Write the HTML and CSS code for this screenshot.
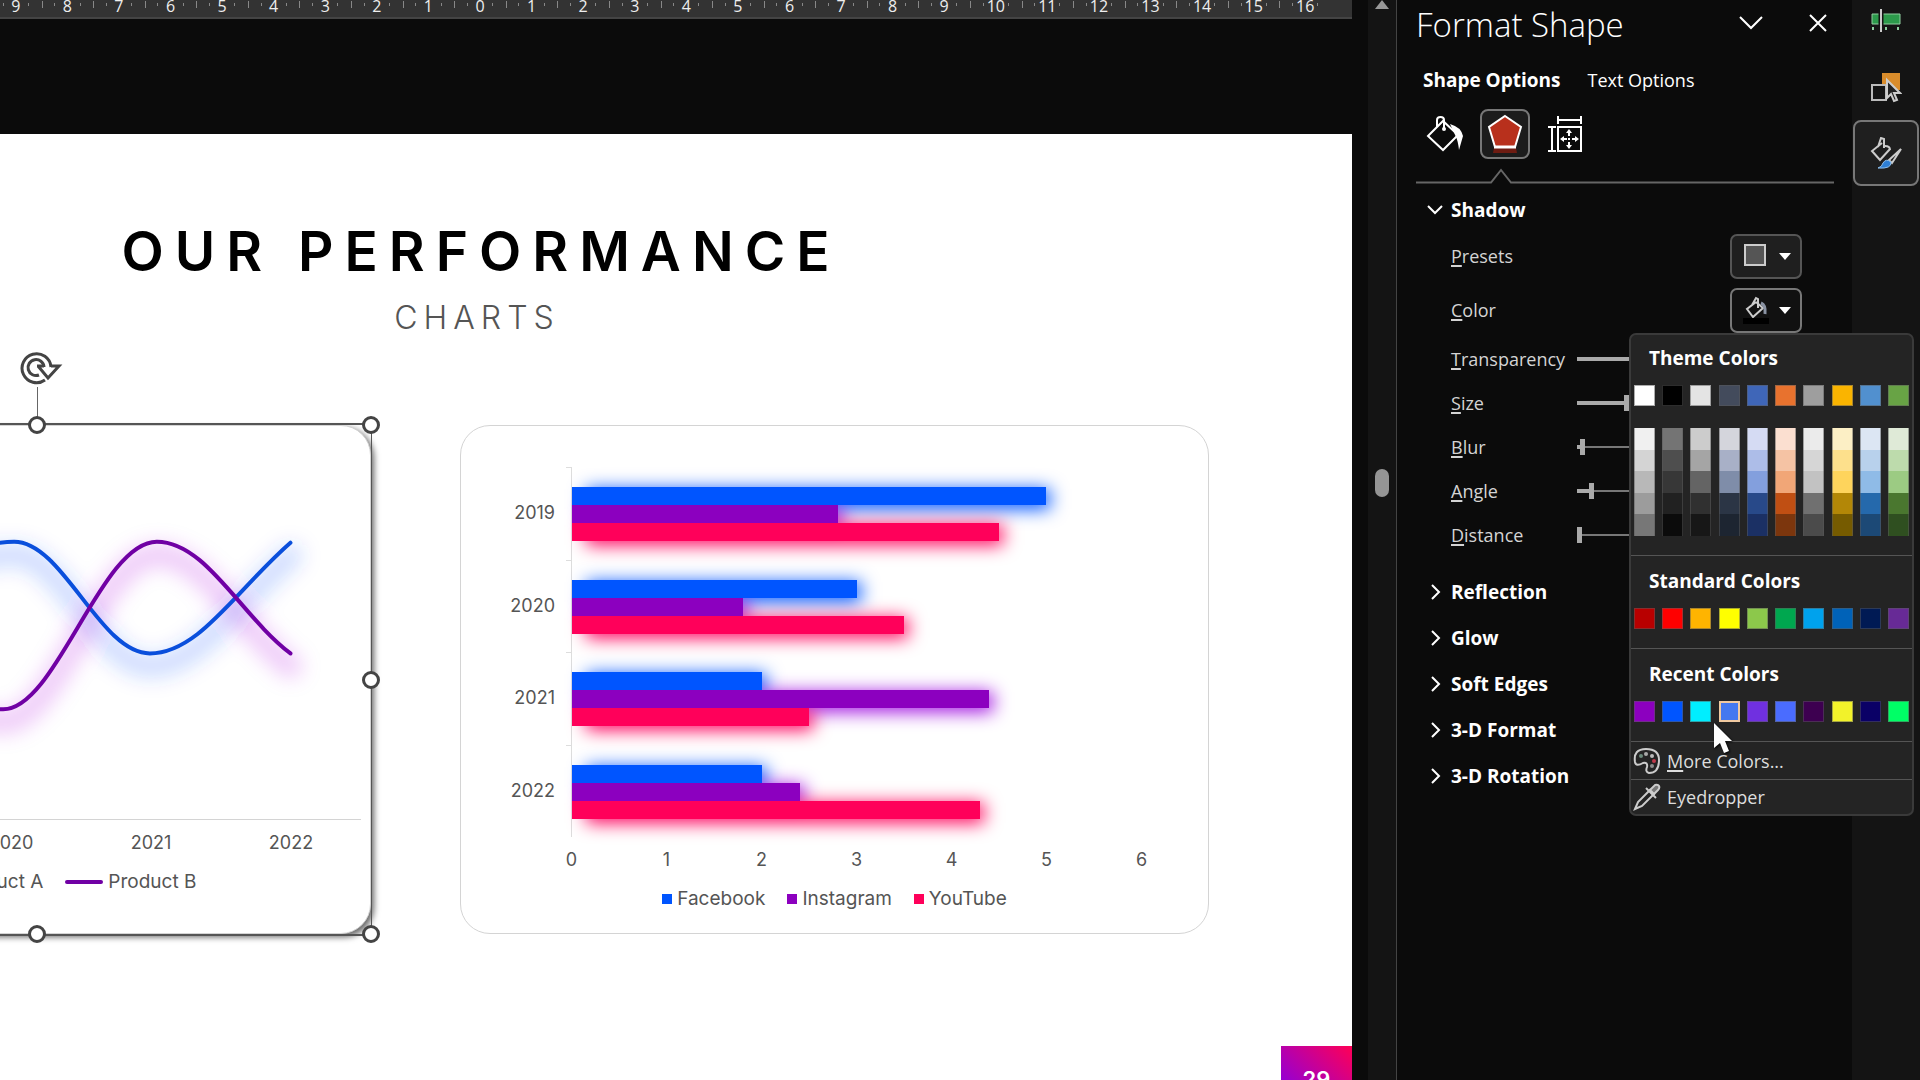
FILE: index.html
```html
<!DOCTYPE html>
<html lang="en">
<head>
<meta charset="UTF-8" />
<meta name="viewport" content="width=device-width, initial-scale=1" />
<title>Format Shape</title>
<link rel="stylesheet" href="styles.css">
</head>
<body>

<main class="workspace">
  <div class="ruler" id="ruler"></div>

  <section class="slide">
    <h1>OUR PERFORMANCE</h1>
    <p class="subtitle">CHARTS</p>

    <div class="cards">
      <article class="card line-card">
        <svg class="line-chart" viewBox="0 0 560 394">
          <defs>
            <filter id="glow" x="-20%" y="-50%" width="140%" height="200%">
              <feGaussianBlur stdDeviation="10" />
            </filter>
          </defs>
          <g fill="none" stroke-linecap="round">
            <g filter="url(#glow)" stroke-width="24" transform="translate(0 13)">
              <path stroke="#0050ff" stroke-opacity=".18" d="M69 180C115 150 165 116 213 116C262 116 299 228 349 228C398 228 435 165 490 117" />
              <path stroke="#b010e0" stroke-opacity=".2" d="M69 190C110 220 160 284 202 284C255 284 300 116 356 116C405 116 440 190 490 228" />
            </g>
            <path stroke="#0a4fdc" stroke-width="4" d="M69 180C115 150 165 116 213 116C262 116 299 228 349 228C398 228 435 165 490 117" />
            <path stroke="#7000a4" stroke-width="4" d="M69 190C110 220 160 284 202 284C255 284 300 116 356 116C405 116 440 190 490 228" />
          </g>
        </svg>
        <div class="years"><span>2019</span><span>2020</span><span>2021</span><span>2022</span></div>
        <ul class="legend line-legend">
          <li><i class="dash facebook"></i>Product A</li>
          <li><i class="dash product-b"></i>Product B</li>
        </ul>

        <div class="selection">
          <svg class="rotate" viewBox="0 0 44 36" fill="none" stroke="#444" stroke-width="3">
            <path d="M32 17A14.500 14.500 0 1 0 26 30" />
            <path d="M25 17A8 8 0 1 0 20 25" />
            <path d="M18 16h7M32 16h8l-11 12-10-12" />
          </svg>
          <i class="handle top"></i>
          <i class="handle top right"></i>
          <i class="handle middle right"></i>
          <i class="handle bottom"></i>
          <i class="handle bottom right"></i>
        </div>
      </article>

      <article class="card bar-card">
        <div class="plot" id="plot"></div>
        <div class="scale"><span>0</span><span>1</span><span>2</span><span>3</span><span>4</span><span>5</span><span>6</span></div>
        <ul class="legend bar-legend">
          <li><i class="key facebook"></i>Facebook</li>
          <li><i class="key instagram"></i>Instagram</li>
          <li><i class="key youtube"></i>YouTube</li>
        </ul>
      </article>
    </div>

    <div class="page-number">29</div>
  </section>
</main>

<div class="scrollbar">
  <svg viewBox="0 0 16 10"><path fill="#999" d="M8 0 15 9H1z" /></svg>
  <span class="thumb"></span>
</div>

<aside class="pane">
  <header class="pane-header">
    <h2>Format Shape</h2>
    <button class="plain" aria-label="Pane options"><svg width="24" height="14" viewBox="0 0 24 14"><path d="M1 1 12 12 23 1" /></svg></button>
    <button class="plain" aria-label="Close"><svg width="18" height="18" viewBox="0 0 18 18"><path d="M1 1 17 17M17 1 1 17" /></svg></button>
  </header>

  <nav class="tabs">
    <button class="plain active">Shape Options</button>
    <button class="plain">Text Options</button>
  </nav>

  <div class="categories">
    <button class="category" aria-label="Fill and line">
      <svg width="38" height="38" viewBox="0 0 38 38">
        <path d="M2 21 17 6 32 20 17 35z" />
        <path d="M11 12V5q0-3 3.500-3T18 5v9" />
        <circle cx="18" cy="14" r="2" fill="#fff" stroke="none" />
        <path d="M24 9q11 3 13 12l-4 14q-1-9-3-13z" fill="#fff" stroke="none" />
      </svg>
    </button>
    <button class="category selected" aria-label="Effects">
      <svg width="38" height="40" viewBox="0 0 38 40">
        <path fill="#6e1c12" stroke="none" d="M8 34h22l1 5H7z" />
        <path fill="#b8301c" d="M19 2 35 13 29 33H9L3 13z" />
        <path stroke-width="3" d="M8 33h22" />
      </svg>
    </button>
    <button class="category" aria-label="Size and properties">
      <svg width="38" height="38" viewBox="0 0 38 38">
        <path d="M12 12h23v24H12zM12 1v8M35 1v8M12 5h23M2 12h8M2 36h8M6 12v24" />
        <path d="M17 24h4M26 24h4M23 17v4M23 27v4" />
        <path fill="#fff" stroke="none" d="M14 24l4-3v6zM33 24l-4-3v6zM23 14l3 4h-6zM23 34l3-4h-6zM22 23h2v2h-2z" />
      </svg>
    </button>
  </div>
  <svg class="pointer" viewBox="0 0 420 16" preserveAspectRatio="xMinYMid slice"><path d="M0 14.500H75L85 2 95 14.500H420" /></svg>

  <section class="shadow-options">
    <button class="section-title"><svg width="16" height="16" viewBox="0 0 16 16"><path d="M1 4l7 7 7-7" /></svg>Shadow</button>

    <div class="option tall">
      <span><u>P</u>resets</span>
      <button class="picker" aria-label="Presets" aria-haspopup="true">
        <svg width="26" height="28" viewBox="0 0 26 28"><path d="M2 3h20v20H2z" fill="#555" stroke="#ccc" /></svg>
        <span class="arrow"></span>
      </button>
    </div>

    <div class="option tall color-option">
      <span><u>C</u>olor</span>
      <button class="picker open" aria-label="Color" aria-haspopup="true" aria-expanded="true">
        <svg width="26" height="28" viewBox="0 0 26 28">
          <path stroke="#ccc" d="M13 6 4 13 10 21 20 12 13 6M9 9l4-7 2 1v9" />
          <path stroke="#8a93a3" stroke-width="3" d="M18 7q5 2 4 11" />
          <path d="M0 22h26v6H0z" fill="#000" stroke="none" />
        </svg>
        <span class="arrow"></span>
      </button>

      <div class="color-menu">
        <section class="theme">
          <h3>Theme Colors</h3>
          <div class="swatches" id="theme"></div>
          <div class="swatches shades" id="shades"></div>
        </section>
        <section>
          <h3>Standard Colors</h3>
          <div class="swatches" id="standard"></div>
        </section>
        <section>
          <h3>Recent Colors</h3>
          <div class="swatches" id="recent"></div>
        </section>
        <button class="menu-item">
          <svg width="28" height="28" viewBox="0 0 28 28">
            <path stroke="#ccc" d="M2 15Q0 2 13 2T26 13Q26 26 16 26Q12 25 14 20Q15 15 10 16Q3 20 2 15z" />
            <g stroke="none"><circle cx="8" cy="9" r="2" fill="#6b8a7b" /><circle cx="13" cy="7" r="2" fill="#aaa" /><circle cx="19" cy="9" r="2" fill="#bbb" /><circle cx="21" cy="14" r="2" fill="#c0394b" /><circle cx="19" cy="19" r="2" fill="#8d8d8d" /></g>
          </svg>
          <span><u>M</u>ore Colors...</span>
        </button>
        <button class="menu-item eyedropper">
          <svg width="28" height="28" viewBox="0 0 28 28">
            <path d="M2 26 5 19 17 7 21 11 9 23z" />
            <path fill="#777" d="M17 7l5-5q3-1 4 1t-1 4l-4 4z" />
            <path d="M13 5l10 10" />
          </svg>
          <span>Eyedropper</span>
        </button>
      </div>
    </div>

    <div class="option"><label for="transparency"><u>T</u>ransparency</label><input type="range" id="transparency" value="60" /></div>
    <div class="option"><label for="size"><u>S</u>ize</label><input type="range" id="size" value="30" /></div>
    <div class="option"><label for="blur"><u>B</u>lur</label><input type="range" id="blur" value="2" /></div>
    <div class="option"><label for="angle"><u>A</u>ngle</label><input type="range" id="angle" value="8" /></div>
    <div class="option"><label for="distance"><u>D</u>istance</label><input type="range" id="distance" value="0" /></div>
  </section>

  <button class="section-title"><svg width="16" height="16" viewBox="0 0 16 16"><path d="M5 1l7 7-7 7" /></svg>Reflection</button>
  <button class="section-title"><svg width="16" height="16" viewBox="0 0 16 16"><path d="M5 1l7 7-7 7" /></svg>Glow</button>
  <button class="section-title"><svg width="16" height="16" viewBox="0 0 16 16"><path d="M5 1l7 7-7 7" /></svg>Soft Edges</button>
  <button class="section-title"><svg width="16" height="16" viewBox="0 0 16 16"><path d="M5 1l7 7-7 7" /></svg>3-D Format</button>
  <button class="section-title"><svg width="16" height="16" viewBox="0 0 16 16"><path d="M5 1l7 7-7 7" /></svg>3-D Rotation</button>
</aside>

<nav class="rail">
  <button aria-label="Animation pane">
    <svg width="32" height="32" viewBox="0 0 32 32">
      <path fill="#2c9a4b" stroke="#8fcfa0" stroke-width="1" d="M2 9h28v10H2z" />
      <path stroke="#141414" stroke-width="5" d="M11 4v24" />
      <path stroke="#ccc" d="M11 4v23" />
      <path stroke="#8fcfa0" d="M3 22v3M16 22v3M28 22v3" />
    </svg>
  </button>
  <button aria-label="Selection pane">
    <svg width="32" height="32" viewBox="0 0 32 32">
      <path fill="#d98c2b" stroke="none" d="M12 2h18v17H12z" />
      <path fill="#141414" stroke="#bbb" d="M2 14h14v15H2z" />
      <path fill="#222" stroke="#ccc" d="M17 9v18l4-4 3 7 3-1-3-7h6z" />
    </svg>
  </button>
  <button class="selected" aria-label="Format shape">
    <svg width="32" height="32" viewBox="0 0 32 32">
      <path stroke="#ccc" d="M12 6 2 14l8 9 10-11M8 10l3-9 3 1v9M15 9q5 0 5 4" />
      <path stroke="#ccc" d="M31 12 19 23l3 3z" />
      <path fill="#2d7fd6" stroke="#8fc0ee" stroke-width="1" d="M8 31q4-1 5-5 3-5 8-1 1 7-13 6z" />
    </svg>
  </button>
</nav>

<svg class="cursor" viewBox="0 0 20 32"><path fill="#fff" d="M1 0v25l6-5 4 10 5-2-4-10h7z" /></svg>

<script>
  // horizontal ruler, centre of the slide is 0
  const ruler = document.getElementById('ruler');
  for (let i = -9; i <= 16; i++) {
    ruler.innerHTML += `<span>${Math.abs(i)}</span>`;
  }

  // bar chart
  const maxValue = 6;
  const series = ['facebook', 'instagram', 'youtube'];
  const data = {
    2019: [5, 2.8, 4.5],
    2020: [3, 1.8, 3.5],
    2021: [2, 4.4, 2.5],
    2022: [2, 2.4, 4.3]
  };
  const plot = document.getElementById('plot');
  Object.keys(data).forEach(year => {
    const bars = data[year].map((v, i) =>
      `<div class="bar ${series[i]}" style="width:${v / maxValue * 100}%"></div>`).join('');
    plot.innerHTML += `<span class="year">${year}</span><div class="group">${bars}</div>`;
  });

  // colour menu
  const palettes = {
    theme: ['#ffffff', '#000000', '#e4e4e4', '#434b5c', '#3f66b8', '#e8722e', '#9e9e9e', '#fab400', '#5190cf', '#68a345'],
    shades: [
      '#f0f0f0', '#747474', '#cccccc', '#d4d5dc', '#d5dbf3', '#fbdfd0', '#ebebeb', '#fcefc5', '#dce6f3', '#dfead7',
      '#d4d4d4', '#4e4e4e', '#a5a5a5', '#a8b0c7', '#adbde8', '#f5c3a4', '#d6d6d6', '#fde08c', '#b8d1ec', '#bddbac',
      '#b8b8b8', '#373737', '#646464', '#7f8da9', '#839fdd', '#f1a677', '#c2c2c2', '#fed45c', '#8fbbe7', '#9ccb83',
      '#9c9c9c', '#212121', '#303030', '#2b3545', '#284989', '#c04f13', '#707070', '#b38707', '#2569ac', '#4a772f',
      '#777777', '#0b0b0b', '#171717', '#1d2531', '#1b3064', '#7c360d', '#4b4b4b', '#765b00', '#1c4976', '#2f4f20'
    ],
    standard: ['#b80000', '#ff0000', '#ffb400', '#ffff00', '#8cc84b', '#00a74f', '#00a2ed', '#0062b8', '#001a54', '#672a96'],
    recent: ['#8c00bf', '#0055ff', '#00eeff', '#4478f0', '#7030e0', '#4a6cff', '#3d0050', '#f2f22a', '#0a0066', '#00ff66']
  };
  Object.keys(palettes).forEach(name => {
    document.getElementById(name).innerHTML = palettes[name].map(c =>
      `<button aria-label="${c}" style="background:${c}"></button>`).join('');
  });
  document.querySelectorAll('#recent button')[3].classList.add('hover');

  // filled part of the sliders
  document.querySelectorAll('input[type=range]').forEach(input => {
    const paint = () => input.style.setProperty('--fill', input.value + '%');
    input.addEventListener('input', paint);
    paint();
  });
</script>

</body>
</html>
```
FILE: styles.css
```css
* { box-sizing: border-box; }
body {
  margin: 0; height: 100vh; display: flex; overflow: hidden;
  background: #0b0b0b; color: #fff; font-family: "Open Sans", "Noto Sans", sans-serif; font-size: 18px;
}
h1, h2, h3, p, ul { margin: 0; padding: 0; }
button { font: inherit; color: inherit; padding: 0; border: none; background: none; cursor: pointer; }
svg { display: block; fill: none; flex: none; }
button svg { stroke: #fff; stroke-width: 2; }
u { text-decoration-thickness: 2px; text-underline-offset: 2px; text-decoration-skip-ink: none; }

/* editing area */
.workspace { flex: 1; min-width: 0; padding-right: 16px; display: flex; flex-direction: column; overflow: hidden; }
.ruler {
  display: flex; height: 19px; flex: none; margin-bottom: 115px; padding-right: 21px;
  background: #333; border-bottom: 2px solid #444;
}
.ruler span {
  flex: 1; font-size: 16px; line-height: 12px; text-align: center; color: #eee;
  background:
    linear-gradient(#888, #888) 0 1px / 1px 7px no-repeat,
    linear-gradient(#888, #888) 25% 3px / 1px 3px no-repeat,
    linear-gradient(#888, #888) 75% 3px / 1px 3px no-repeat;
}
.ruler span:first-child { margin-left: -10px; }
.slide {
  flex: 1; margin-left: -398px; padding: 85px 143px 0 100px; position: relative;
  background: #fff; color: #555; font-family: Inter, sans-serif; overflow: hidden;
}
/* the titles are centred on the slide, not on the cards */
.slide h1, .subtitle { text-align: center; margin: 0 -143px 0 -100px; }
.slide h1 { font-size: 55px; line-height: 64px; font-weight: 600; letter-spacing: 11px; padding-left: 8px; color: #000; }
.subtitle { font-size: 32px; line-height: 40px; font-weight: 300; letter-spacing: 6px; padding-top: 15px; }

.cards { display: grid; grid-template-columns: 669fr 749fr; gap: 89px; margin-top: 87px; }
.card { border: 1px solid #d4d4d4; border-radius: 30px; background: #fff; line-height: 24px; }
.legend { list-style: none; display: flex; justify-content: center; gap: 22px; margin-top: 15px; font-size: 19px; }
.legend li { display: flex; align-items: center; gap: 5px; }
.facebook { background: #0055ff; color: #0055ff; }
.instagram { background: #8c00bf; color: #a010e0; }
.youtube { background: #ff005a; color: #ff005a; }
.product-b { background: #7000a4; }
.key { width: 10px; height: 10px; }
.dash { width: 38px; height: 4px; border-radius: 2px; }

.line-card { position: relative; padding: 0 9px 0 98px; box-shadow: 3px 3px 6px rgba(0, 0, 0, .6); }
.line-chart { width: 100%; height: 394px; border-bottom: 1px solid #d4d4d4; }
.years { display: flex; margin-top: 11px; }
.years span { flex: 1; text-align: center; }
.line-legend { padding-right: 54px; }

/* selection frame drawn over the card */
.selection { position: absolute; inset: -3px -2px; border: 2px solid #555; border-right-width: 1px; }
.handle {
  position: absolute; left: 50%; width: 18px; height: 18px; margin: -9px;
  border: 3px solid #444; border-radius: 50%; background: #fff;
}
.handle.top { top: 0; }
.handle.middle { top: 50%; }
.handle.bottom { top: 100%; }
.handle.right { left: 100%; }
.rotate { position: absolute; left: 50%; top: -75px; width: 44px; height: 36px; margin-left: -18px; }
.selection::before { content: ""; position: absolute; left: 50%; top: -38px; height: 38px; border-left: 1px solid #666; }

.bar-card { padding: 41px 67px 22px 0; }
.plot { display: grid; grid-template-columns: 94px 1fr; column-gap: 16px; grid-auto-rows: 1fr; height: 370px; }
.year { align-self: center; text-align: right; }
.group { padding-top: 20px; border-left: 1px solid #ddd; isolation: isolate; position: relative; }
.group::after { content: ""; position: absolute; left: -6px; top: 0; width: 6px; height: 1px; background: #ddd; }
.bar { height: 18px; position: relative; }
.bar::before { content: ""; position: absolute; inset: 0 0 0 12px; z-index: -1; box-shadow: 3px 3px 18px 1px currentColor; }
.scale { display: flex; margin: 11px -48px 0 63px; }
.scale span { flex: 1; text-align: center; }
.bar-legend { padding-left: 67px; }
.page-number {
  position: absolute; right: 0; top: 912px; width: 71px; height: 71px; line-height: 66px; text-align: center;
  font-size: 22px; font-weight: 600; color: #fff; background: linear-gradient(45deg, #7000ff, #ff0055);
}

.scrollbar { width: 29px; background: #141414; border-right: 1px solid #444; display: flex; flex-direction: column; align-items: center; }
.scrollbar svg { width: 16px; height: 10px; }
.thumb { width: 14px; height: 28px; margin-top: 459px; border-radius: 7px; background: #959595; }

/* format pane */
.pane { width: 455px; flex: none; padding: 0 18px 0 19px; }
.pane-header { display: flex; align-items: center; height: 50px; padding-right: 7px; }
.pane-header h2 { flex: 1; font-size: 33px; line-height: 40px; font-weight: 300; }
.pane-header .plain { margin-left: 46px; padding-bottom: 4px; }
.tabs { display: flex; gap: 27px; height: 59px; align-items: center; padding-left: 7px; }
.tabs .active { font-weight: 700; font-size: 19px; }
.categories { display: flex; gap: 10px; padding-left: 4px; }
.category { width: 50px; height: 50px; display: flex; align-items: center; justify-content: center; border: 1px solid transparent; border-radius: 8px; }
.category.selected { border: 2px solid #777; background: #1c1c1c; }
.pointer { width: 100%; height: 16px; margin-top: 9px; stroke: #666; stroke-width: 2; }

.section-title { display: flex; align-items: center; gap: 8px; width: 100%; height: 46px; padding-left: 11px; font-size: 19px; font-weight: 700; }
.shadow-options { padding-bottom: 12px; }
.shadow-options .section-title { height: 45px; padding-top: 7px; }
.option { display: flex; align-items: center; height: 44px; padding-left: 35px; color: #d4d4d4; }
.option.tall { height: 54px; justify-content: space-between; padding-right: 32px; position: relative; }
.option label { width: 126px; flex: none; }
.picker {
  width: 72px; height: 45px; display: flex; align-items: center; justify-content: center; gap: 10px; padding-left: 2px;
  border: 2px solid #555; border-radius: 7px; background: #1f1f1f;
}
.picker.open { background: #111; border-color: #777; }
.arrow { border: 6px solid transparent; border-top: 7px solid #fff; border-bottom: 0; }

input[type=range] { appearance: none; width: 160px; height: 18px; margin: 0; background: none; }
input[type=range]::-webkit-slider-runnable-track {
  height: 16px;
  background:
    linear-gradient(#aaa, #aaa) 0 50% / var(--fill) 4px no-repeat,
    linear-gradient(#777, #777) 0 50% / 100% 2px no-repeat;
}
input[type=range]::-webkit-slider-thumb { appearance: none; width: 5px; height: 16px; background: #aaa; }

/* colour drop-down */
.color-menu {
  position: absolute; z-index: 2; top: 50px; right: -80px; width: 285px;
  background: #242424; border: 2px solid #3a3a3a; border-radius: 7px; color: #fff;
}
.color-menu section { height: 93px; padding: 13px 3px 0; border-bottom: 1px solid #555; }
.color-menu .theme { height: 221px; padding-top: 11px; }
.color-menu h3 { font-size: 19px; line-height: 24px; padding-left: 15px; margin-bottom: 15px; }
.swatches { display: grid; grid-template-columns: repeat(10, 21px); justify-content: space-between; }
.swatches button { height: 21px; border: 1px solid rgba(90, 90, 90, .5); }
.shades { margin-top: 22px; height: 108px; grid-auto-rows: 1fr; }
.shades button { height: auto; border-width: 0 1px; }
.swatches .hover { border: 2px solid #f0c9a0; }
.menu-item { display: flex; align-items: center; gap: 6px; width: 100%; height: 37px; padding-left: 2px; color: #ddd; }
.menu-item svg { stroke: #ccc; }
.eyedropper { border-top: 1px solid #555; height: 35px; }

.rail { width: 68px; flex: none; background: #141414; padding: 0 1px; }
.rail button { width: 66px; height: 66px; display: flex; align-items: center; justify-content: center; border-radius: 8px; }
.rail button:first-child { margin-top: -12px; }
.rail .selected { border: 2px solid #777; background: #1f1f1f; }

.cursor { position: absolute; z-index: 3; left: 1713px; top: 723px; width: 20px; height: 32px; filter: drop-shadow(1px 1px 1px #000); }
```
